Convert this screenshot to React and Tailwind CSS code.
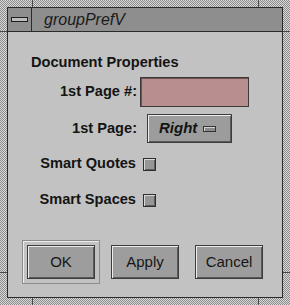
import React from 'react';

// raised motif look, like an old IRIX dialog
const raised = 'border border-[#3c3c3c] shadow-[inset_1px_1px_0_#ececec,inset_-1px_-1px_0_#5a5a5a]';

const Button = ({ children, className = '' }) => (
  <button
    type="button"
    className={`w-[68px] h-[34px] bg-[#9d9d9d] text-[15px] text-[#161616] ${raised} ${className}`}
  >
    {children}
  </button>
);

const Check = () => (
  <span className="block w-[13px] h-[13px] border border-[#2e2e2e] bg-[#969696] shadow-[inset_1px_1px_0_#d8d8d8,inset_-1px_-1px_0_#5e5e5e]" />
);

const Tick = ({ className }) => <span className={`absolute bg-[#4a4a4a] ${className}`} />;

export default function App() {
  return (
    <div
      className="relative w-[290px] h-[305px] p-[7px] bg-[repeating-conic-gradient(#dadada_0_25%,#8a8a8a_0_50%)] bg-[length:2px_2px]"
      style={{ fontFamily: '"Liberation Sans", Arial, sans-serif' }}
    >
      {/* frame corner ticks */}
      <Tick className="left-[32px] top-0 w-px h-[7px]" />
      <Tick className="left-[258px] top-0 w-px h-[7px]" />
      <Tick className="left-[32px] bottom-0 w-px h-[7px]" />
      <Tick className="left-[258px] bottom-0 w-px h-[7px]" />
      <Tick className="left-0 top-[31px] w-[7px] h-px" />
      <Tick className="right-0 top-[31px] w-[7px] h-px" />
      <Tick className="left-0 top-[272px] w-[7px] h-px" />
      <Tick className="right-0 top-[272px] w-[7px] h-px" />

      <div className="flex flex-col h-full border border-[#2a2a2a]">
        {/* title bar */}
        <div className="flex h-[24px] bg-[#8e8e8e] border-b border-[#2a2a2a]">
          <div className="flex items-center justify-center w-[24px] border-r border-[#2a2a2a]">
            <span className="block w-[17px] h-[5px] border border-[#1e1e1e] bg-[#bdbdbd]" />
          </div>
          <span className="pl-[12px] text-[16px] leading-[23px] italic text-[#1a1a1a]">groupPrefV</span>
        </div>

        {/* body */}
        <div className="flex flex-col flex-1 bg-[#c2c2c2] pt-[22px] text-[14.6px] font-bold text-[#141414]">
          <div className="pl-[23px] leading-[16px]">Document Properties</div>

          <div className="flex items-center h-[30px] mt-[7px]">
            <span className="w-[129px] text-right">1st Page #:</span>
            <span className="block ml-[3px] w-[109px] h-[30px] bg-[#b98e8e] border border-[#3a3a3a] shadow-[inset_1px_1px_0_#6e5252]" />
          </div>

          <div className="flex items-center h-[29px] mt-[7px]">
            <span className="w-[129px] text-right">1st Page:</span>
            <div
              className={`flex items-center ml-[10px] w-[85px] h-[29px] bg-[#9c9c9c] ${raised}`}
            >
              <span className="pl-[11px] text-[15px] italic">Right</span>
              <span className="block ml-auto mr-[15px] w-[13px] h-[6px] border border-[#333] bg-[#8a8a8a] shadow-[inset_1px_1px_0_#d0d0d0]" />
            </div>
          </div>

          <div className="flex items-center h-[16px] mt-[13px]">
            <span className="w-[128px] text-right">Smart Quotes</span>
            <span className="ml-[7px]"><Check /></span>
          </div>

          <div className="flex items-center h-[16px] mt-[20px]">
            <span className="w-[128px] text-right">Smart Spaces</span>
            <span className="ml-[7px]"><Check /></span>
          </div>

          <div className="flex items-start mt-[32px] pl-[14px] font-normal">
            <div className="p-[4px] border border-[#8c8c8c] shadow-[inset_1px_1px_0_#ececec]">
              <Button>OK</Button>
            </div>
            <Button className="ml-[11px] mt-[5px]">Apply</Button>
            <Button className="ml-[16px] mt-[5px]">Cancel</Button>
          </div>
        </div>
      </div>
    </div>
  );
}
